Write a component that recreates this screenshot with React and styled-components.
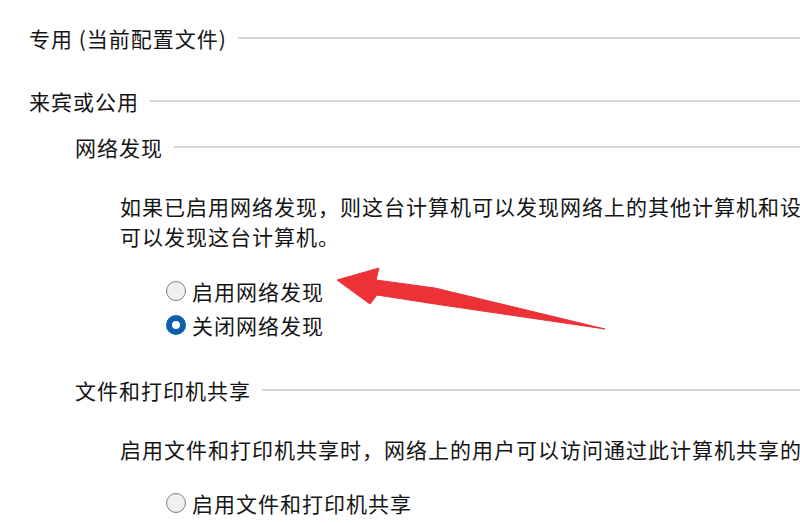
import styled, { createGlobalStyle } from 'styled-components';

const GlobalStyle = createGlobalStyle`
  html, body {
    margin: 0;
    padding: 0;
    background: #fff;
    overflow: hidden;
  }
  body {
    font-family: "Noto Sans CJK SC", "Noto Sans", sans-serif;
    color: #141414;
  }
`;

const Page = styled.div`
  position: relative;
  width: 800px;
  height: 523px;
  overflow: hidden;
  padding-top: 22px;
  box-sizing: border-box;
`;

const GroupHeader = styled.div`
  display: flex;
  align-items: center;
  gap: 11px;
  height: 32px;
  margin-top: ${p => p.$top || 0}px;
  padding-left: ${p => p.$indent}px;
  font-size: 21px;
  letter-spacing: 1px;
  white-space: nowrap;

  &::after {
    content: '';
    flex: 1;
    height: 2px;
    background: #d6d6d6;
  }
`;

const Description = styled.div`
  margin-top: ${p => p.$top}px;
  padding-left: 120px;
  font-size: 21px;
  letter-spacing: 1px;
  line-height: 30px;

  div {
    white-space: nowrap;
    overflow: hidden;
  }
`;

const RadioList = styled.div`
  margin-top: ${p => p.$top}px;
  padding-left: 166px;
  display: flex;
  flex-direction: column;
`;

const RadioRow = styled.label`
  display: flex;
  align-items: center;
  gap: 6px;
  height: 34px;
  font-size: 21px;
  letter-spacing: 1px;
  white-space: nowrap;
`;

const RadioDot = styled.span`
  width: 20px;
  height: 20px;
  border-radius: 50%;
  box-sizing: border-box;
  flex-shrink: 0;
  background: ${p => (p.$checked ? '#fff' : '#f0f0f0')};
  border: ${p => (p.$checked ? '6.5px solid #0a5fad' : '1.5px solid #808080')};
`;

const Arrow = styled.svg`
  position: absolute;
  left: 0;
  top: 0;
  pointer-events: none;
`;

function Radio({ checked, children }) {
  return (
    <RadioRow>
      <RadioDot $checked={checked} />
      {children}
    </RadioRow>
  );
}

export default function App() {
  return (
    <Page>
      <GlobalStyle />
      <GroupHeader $indent={29}>专用 (当前配置文件)</GroupHeader>
      <GroupHeader $indent={29} $top={31}>来宾或公用</GroupHeader>
      <GroupHeader $indent={75} $top={14}>网络发现</GroupHeader>
      <Description $top={28}>
        <div>如果已启用网络发现，则这台计算机可以发现网络上的其他计算机和设备，而其他网络计算机也</div>
        <div>可以发现这台计算机。</div>
      </Description>
      <RadioList $top={23}>
        <Radio>启用网络发现</Radio>
        <Radio checked>关闭网络发现</Radio>
      </RadioList>
      <GroupHeader $indent={75} $top={32}>文件和打印机共享</GroupHeader>
      <Description $top={28}>
        <div>启用文件和打印机共享时，网络上的用户可以访问通过此计算机共享的文件和打印机。</div>
      </Description>
      <RadioList $top={22}>
        <Radio>启用文件和打印机共享</Radio>
      </RadioList>
      <Arrow width="800" height="523" viewBox="0 0 800 523">
        <polygon
          points="337,280 379,268 376,280 435,288 605,329 435,304 377,295 370,304"
          fill="#ec3237"
          stroke="#ec3237"
          strokeWidth="1"
          strokeLinejoin="round"
        />
      </Arrow>
    </Page>
  );
}
